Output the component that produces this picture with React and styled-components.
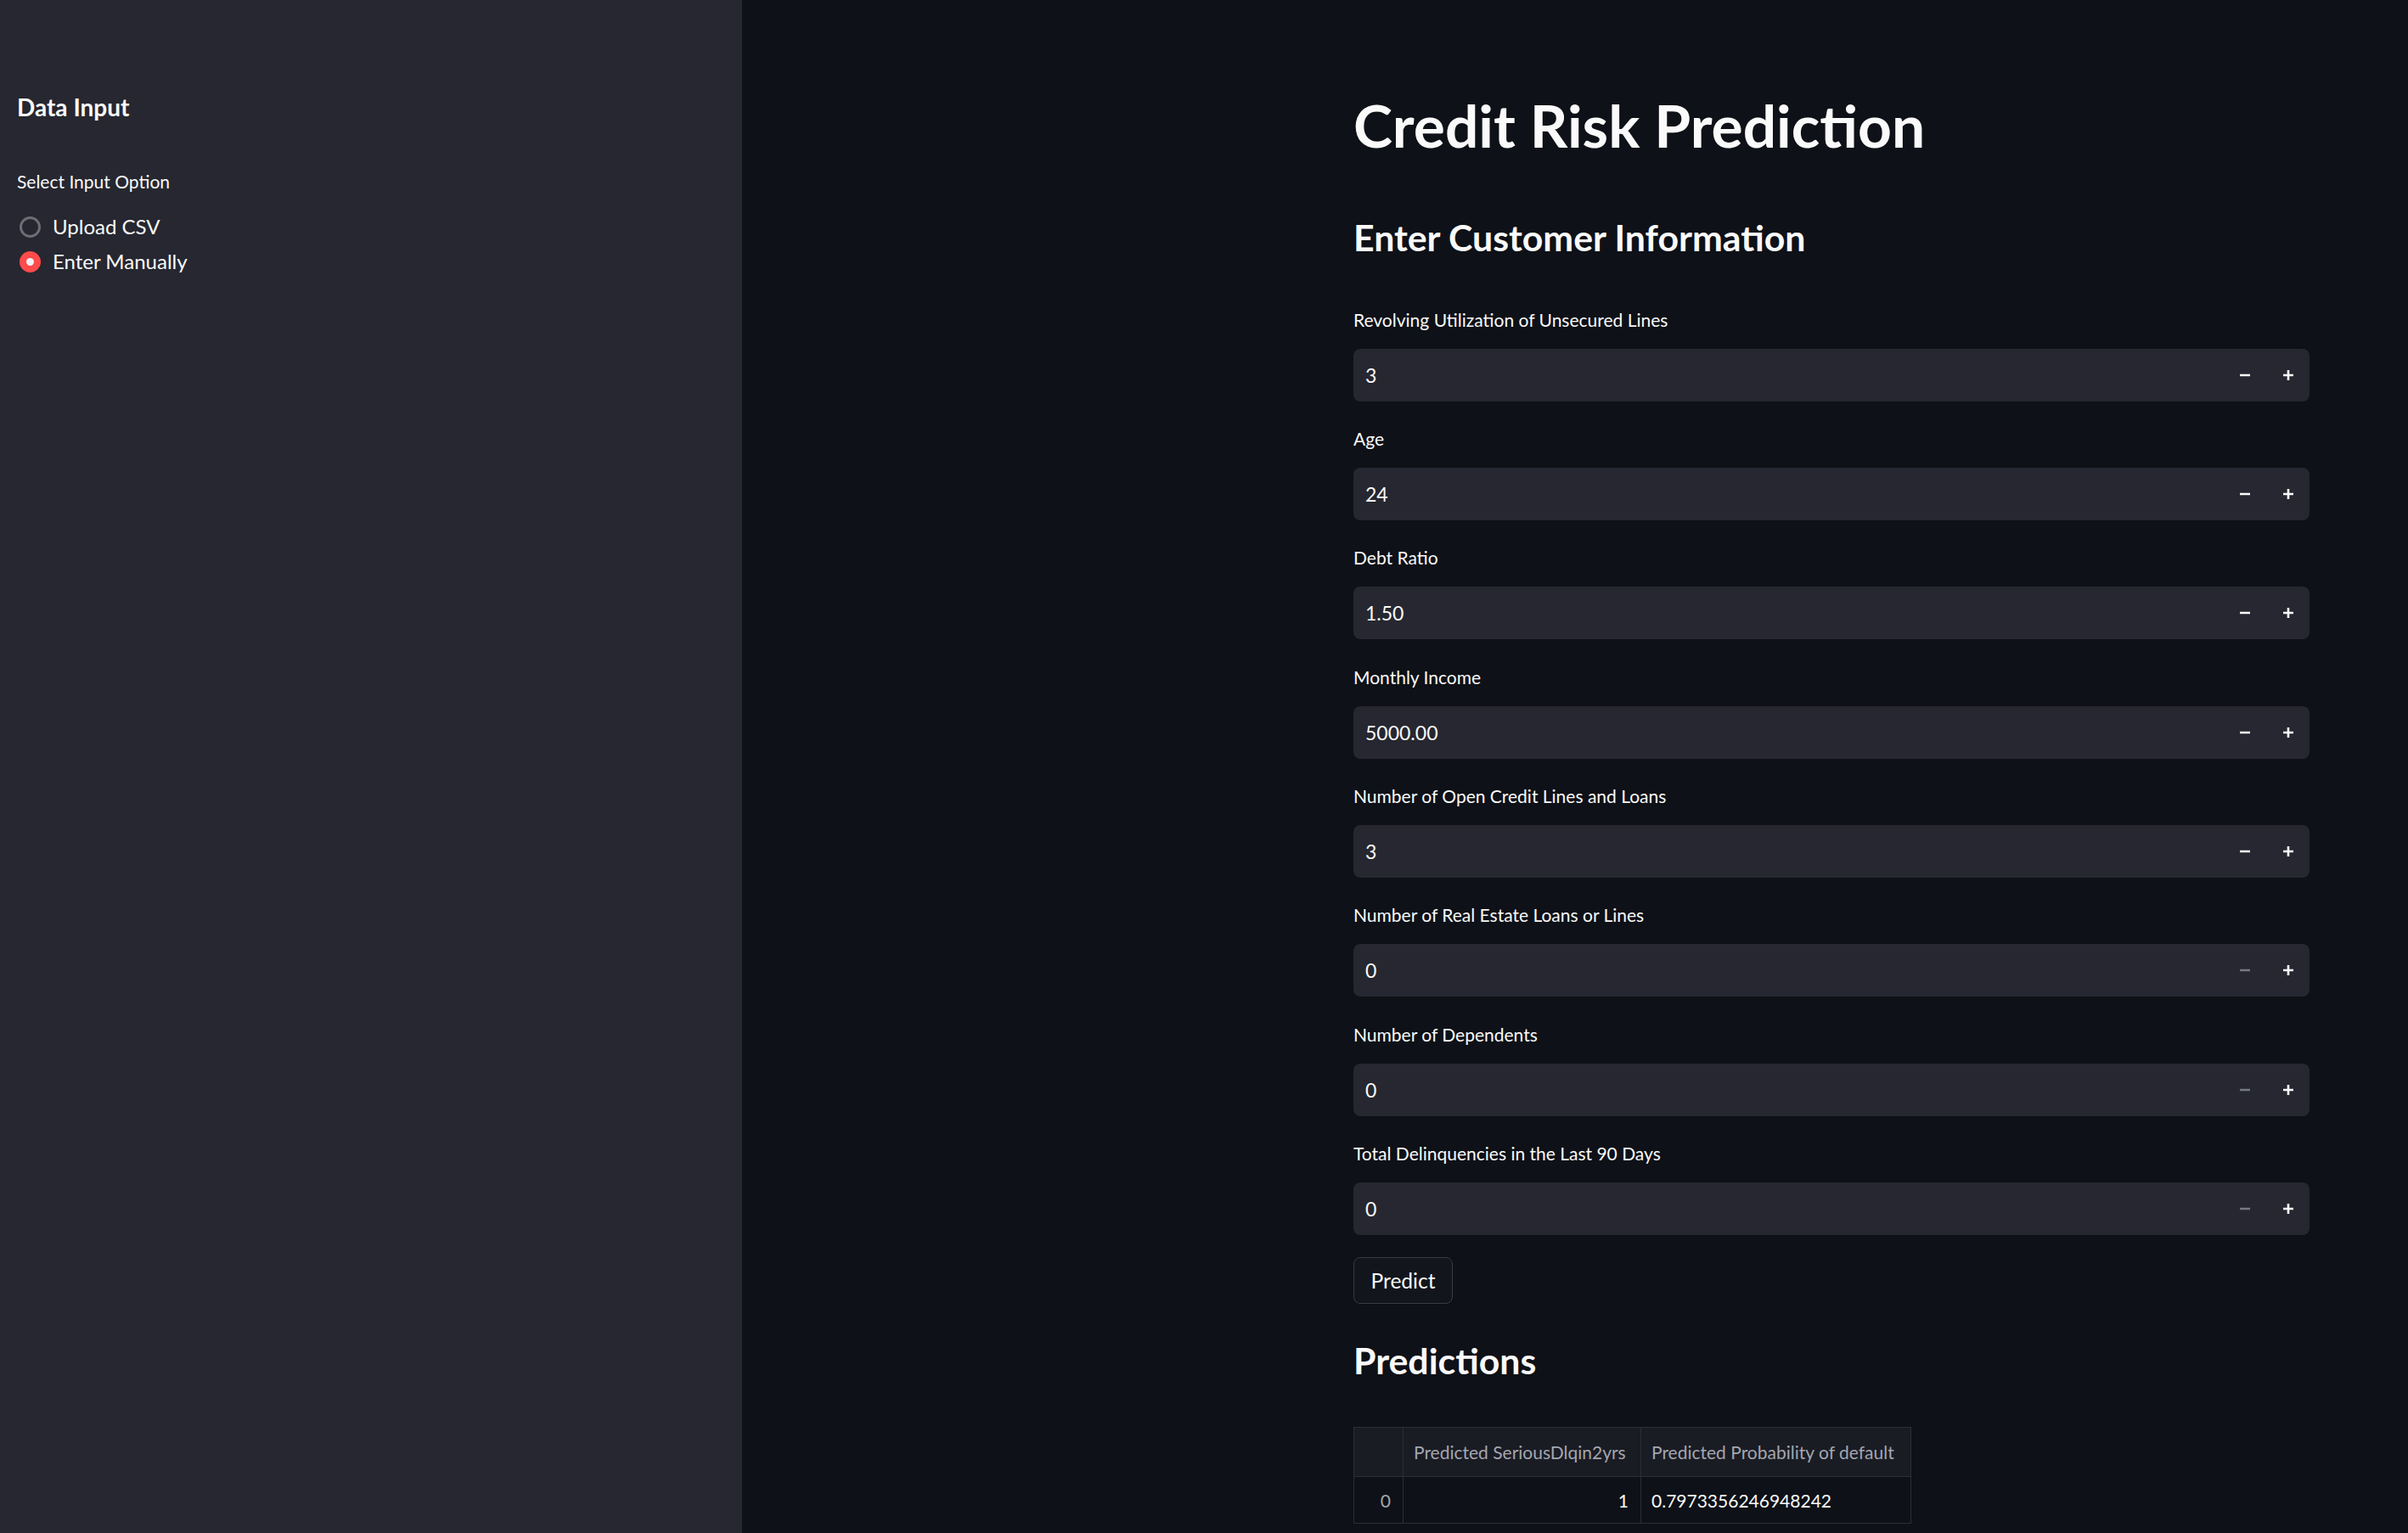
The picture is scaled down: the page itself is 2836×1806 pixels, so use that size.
import React, { useState } from 'react';
import styled, { createGlobalStyle } from 'styled-components';

const GlobalStyle = createGlobalStyle`
  html, body {
    margin: 0;
    padding: 0;
    background: #0e1117;
  }
  body {
    font-family: Lato, "Liberation Sans", sans-serif;
    color: #fafafa;
  }
  * {
    box-sizing: border-box;
  }
`;

const fields = [
  { label: 'Revolving Utilization of Unsecured Lines', value: '3', canDecrease: true },
  { label: 'Age', value: '24', canDecrease: true },
  { label: 'Debt Ratio', value: '1.50', canDecrease: true },
  { label: 'Monthly Income', value: '5000.00', canDecrease: true },
  { label: 'Number of Open Credit Lines and Loans', value: '3', canDecrease: true },
  { label: 'Number of Real Estate Loans or Lines', value: '0', canDecrease: false },
  { label: 'Number of Dependents', value: '0', canDecrease: false },
  { label: 'Total Delinquencies in the Last 90 Days', value: '0', canDecrease: false },
];

const MinusIcon = () => (
  <svg width="14" height="14" viewBox="0 0 14 14">
    <path d="M1 7h12" stroke="currentColor" strokeWidth="2.6" />
  </svg>
);

const PlusIcon = () => (
  <svg width="14" height="14" viewBox="0 0 14 14">
    <path d="M1 7h12M7 1v12" stroke="currentColor" strokeWidth="2.6" />
  </svg>
);

function NumberField({ label, value, canDecrease }) {
  return (
    <Field>
      <Label>{label}</Label>
      <InputBox>
        <ValueInput type="text" value={value} readOnly />
        <StepButton $disabled={!canDecrease}>
          <MinusIcon />
        </StepButton>
        <StepButton>
          <PlusIcon />
        </StepButton>
      </InputBox>
    </Field>
  );
}

export default function App() {
  const [option, setOption] = useState('manual');

  return (
    <Page>
      <GlobalStyle />
      <Sidebar>
        <SideTitle>Data Input</SideTitle>
        <SideLabel>Select Input Option</SideLabel>
        <RadioGroup>
          <RadioRow onClick={() => setOption('csv')}>
            <RadioDot $checked={option === 'csv'} />
            <RadioText>Upload CSV</RadioText>
          </RadioRow>
          <RadioRow onClick={() => setOption('manual')}>
            <RadioDot $checked={option === 'manual'} />
            <RadioText>Enter Manually</RadioText>
          </RadioRow>
        </RadioGroup>
      </Sidebar>

      <Main>
        <Block>
          <Title>Credit Risk Prediction</Title>
          <SubHeader>Enter Customer Information</SubHeader>
          <Fields>
            {fields.map((f) => (
              <NumberField key={f.label} {...f} />
            ))}
          </Fields>
          <PredictButton>Predict</PredictButton>
          <SubHeader $results>Predictions</SubHeader>
          <Table>
            <colgroup>
              <col style={{ width: 58 }} />
              <col style={{ width: 280 }} />
              <col style={{ width: 318 }} />
            </colgroup>
            <thead>
              <tr>
                <HeadCell />
                <HeadCell>Predicted SeriousDlqin2yrs</HeadCell>
                <HeadCell>Predicted Probability of default</HeadCell>
              </tr>
            </thead>
            <tbody>
              <tr>
                <IndexCell>0</IndexCell>
                <Cell $align="right">1</Cell>
                <Cell>0.7973356246948242</Cell>
              </tr>
            </tbody>
          </Table>
        </Block>
      </Main>
    </Page>
  );
}

const Page = styled.div`
  display: flex;
  min-height: 100vh;
  background: #0e1117;
`;

const Sidebar = styled.aside`
  width: 874px;
  flex-shrink: 0;
  background: #262730;
  padding: 110px 20px 0 20px;
`;

const SideTitle = styled.h2`
  margin: 0;
  font-size: 28px;
  line-height: 1.2;
  font-weight: 700;
  color: #fafafa;
`;

const SideLabel = styled.div`
  margin-top: 57px;
  font-size: 21px;
  line-height: 25px;
  color: #fafafa;
`;

const RadioGroup = styled.div`
  margin-top: 22px;
  display: flex;
  flex-direction: column;
`;

const RadioRow = styled.label`
  display: flex;
  align-items: center;
  height: 40.5px;
  gap: 14px;
  padding-left: 3px;
  cursor: pointer;
`;

const RadioDot = styled.span`
  width: 25px;
  height: 25px;
  border-radius: 50%;
  flex-shrink: 0;
  display: flex;
  align-items: center;
  justify-content: center;
  background: ${(p) => (p.$checked ? '#ff4b4b' : 'transparent')};
  border: ${(p) => (p.$checked ? 'none' : '3px solid #6c6e76')};

  &::after {
    content: '';
    display: ${(p) => (p.$checked ? 'block' : 'none')};
    width: 9px;
    height: 9px;
    border-radius: 50%;
    background: #f0f2f6;
  }
`;

const RadioText = styled.span`
  font-size: 24px;
  line-height: 1.2;
  color: #fafafa;
`;

const Main = styled.main`
  flex: 1;
  padding: 106px 0 0 720px;
`;

const Block = styled.div`
  width: 1126px;
  display: flex;
  flex-direction: column;
  align-items: flex-start;
`;

const Title = styled.h1`
  margin: 0;
  font-size: 69.5px;
  line-height: 1.2;
  font-weight: 700;
  color: #fafafa;
`;

const SubHeader = styled.h3`
  margin: ${(p) => (p.$results ? '41px 0 0 0' : '65px 0 0 0')};
  font-size: 42.8px;
  line-height: 1.2;
  font-weight: 700;
  color: #fafafa;
`;

const Fields = styled.div`
  margin-top: 58px;
  width: 100%;
  display: flex;
  flex-direction: column;
  gap: 31.3px;
`;

const Field = styled.div`
  display: flex;
  flex-direction: column;
`;

const Label = styled.label`
  font-size: 21px;
  line-height: 25px;
  margin-bottom: 22px;
  color: #fafafa;
`;

const InputBox = styled.div`
  display: flex;
  align-items: stretch;
  height: 62px;
  background: #262730;
  border-radius: 8px;
  overflow: hidden;
`;

const ValueInput = styled.input`
  flex: 1;
  min-width: 0;
  border: none;
  outline: none;
  background: transparent;
  color: #fafafa;
  font-family: Lato, "Liberation Sans", sans-serif;
  font-size: 23px;
  padding: 0 0 0 14px;
`;

const StepButton = styled.button`
  width: 51px;
  border: none;
  background: transparent;
  display: flex;
  align-items: center;
  justify-content: center;
  padding: 0;
  color: ${(p) => (p.$disabled ? '#767883' : '#fafafa')};
  cursor: ${(p) => (p.$disabled ? 'not-allowed' : 'pointer')};
`;

const PredictButton = styled.button`
  margin-top: 26px;
  width: 117px;
  height: 55px;
  border: 1px solid #393b43;
  border-radius: 8px;
  background: #12151c;
  color: #fafafa;
  font-family: Lato, "Liberation Sans", sans-serif;
  font-size: 24.5px;
  cursor: pointer;
`;

const Table = styled.table`
  margin-top: 53px;
  border-collapse: collapse;
  table-layout: fixed;
  width: 656px;
  font-size: 21px;
`;

const HeadCell = styled.th`
  height: 58px;
  background: #1a1c24;
  border: 1px solid #2c2e36;
  color: #a3a6b0;
  font-weight: 400;
  text-align: left;
  padding: 0 12px;
  white-space: nowrap;
`;

const Cell = styled.td`
  height: 55px;
  border: 1px solid #2c2e36;
  color: #fafafa;
  text-align: ${(p) => p.$align || 'left'};
  padding: 0 14px 0 12px;
  white-space: nowrap;
`;

const IndexCell = styled(Cell)`
  color: #a3a6b0;
  text-align: right;
  padding-right: 14px;
`;
